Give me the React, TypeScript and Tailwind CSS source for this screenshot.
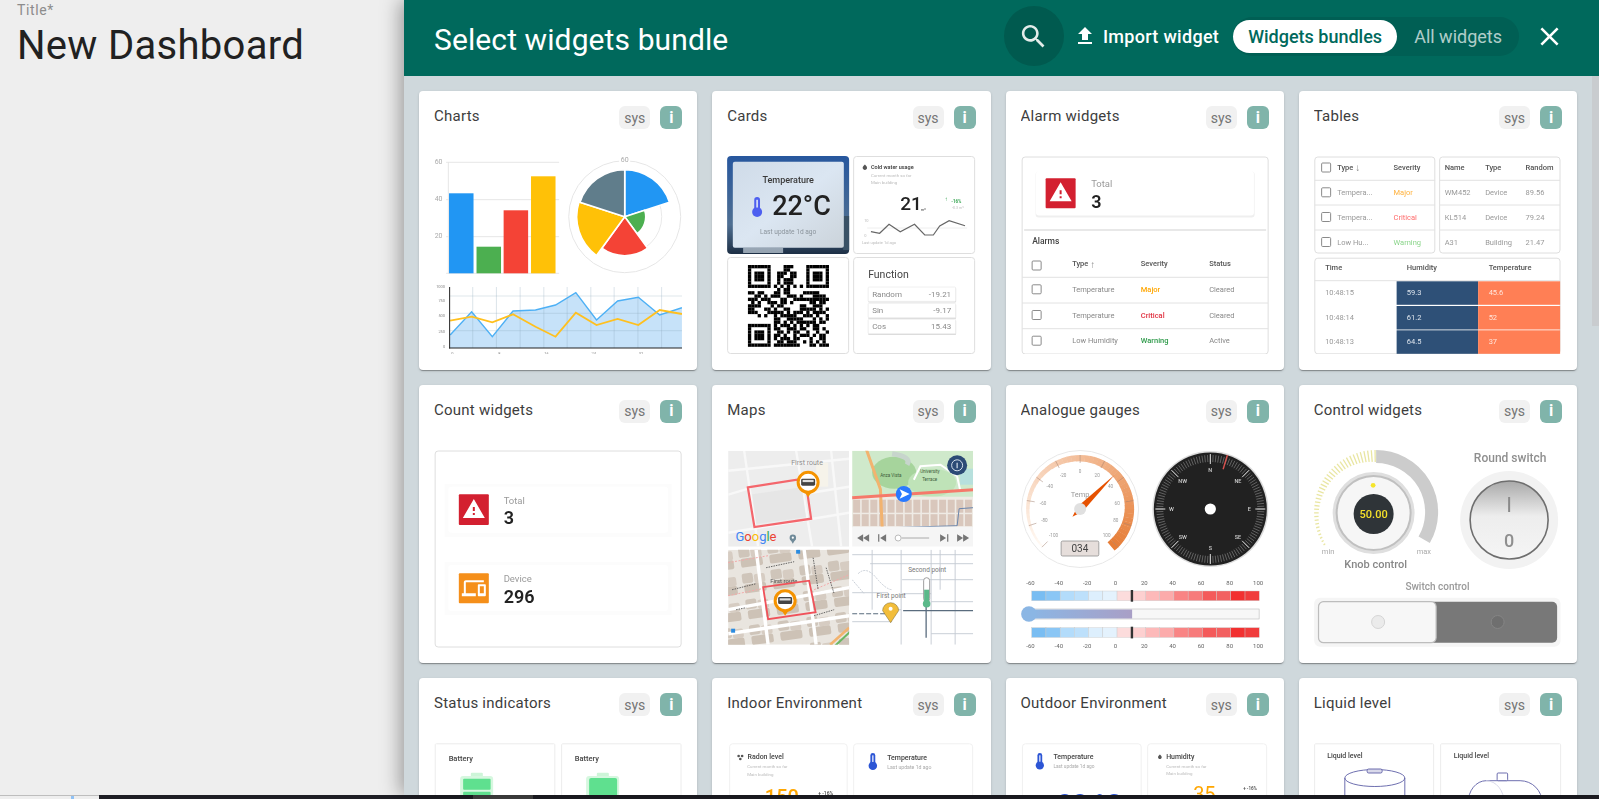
import type { ReactNode } from 'react';

const BUNDLES_ROW = 'h-[278.5px]';

const pol = (cx: number, cy: number, r: number, deg: number): [number, number] => {
  const a = (deg * Math.PI) / 180;
  return [cx + r * Math.sin(a), cy - r * Math.cos(a)];
};

const sector = (cx: number, cy: number, r: number, from: number, to: number) => {
  const [x1, y1] = pol(cx, cy, r, from);
  const [x2, y2] = pol(cx, cy, r, to);
  return `M${cx} ${cy}L${x1} ${y1}A${r} ${r} 0 0 1 ${x2} ${y2}Z`;
};

const arc = (cx: number, cy: number, r: number, from: number, to: number) => {
  const [x1, y1] = pol(cx, cy, r, from);
  const [x2, y2] = pol(cx, cy, r, to);
  return `M${x1} ${y1}A${r} ${r} 0 ${to - from > 180 ? 1 : 0} 1 ${x2} ${y2}`;
};

function T({
  x,
  y,
  s = 7,
  c = '#666',
  w = 400,
  a = 'start',
  children,
}: {
  x: number;
  y: number;
  s?: number;
  c?: string;
  w?: number;
  a?: 'start' | 'middle' | 'end';
  children: ReactNode;
}) {
  return (
    <text x={x} y={y} fontSize={s} fill={c} fontWeight={w} textAnchor={a} dominantBaseline="central">
      {children}
    </text>
  );
}

function Box({ x, y, w, h, r = 3, c = '#dedede' }: { x: number; y: number; w: number; h: number; r?: number; c?: string }) {
  return <rect x={x + 0.5} y={y + 0.5} width={w - 1} height={h - 1} rx={r} fill="#fff" stroke={c} />;
}

function Check({ x, y, s = 9 }: { x: number; y: number; s?: number }) {
  return <rect x={x} y={y} width={s} height={s} rx={1} fill="#fff" stroke="#8a8a8a" />;
}

function Thermo({ x, y, h = 18, c = '#2c55d5' }: { x: number; y: number; h?: number; c?: string }) {
  const k = h / 18;
  return (
    <g transform={`translate(${x} ${y}) scale(${k})`}>
      <rect x={-2.6} y={0} width={5.2} height={13} rx={2.6} fill={c} />
      <circle cx={0} cy={13.5} r={4.5} fill={c} />
      <rect x={-0.8} y={2.5} width={1.6} height={7} fill="#cfd9f7" />
    </g>
  );
}

function Drop({ x, y, s = 6, c = '#555' }: { x: number; y: number; s?: number; c?: string }) {
  return (
    <path
      transform={`translate(${x} ${y}) scale(${s / 24})`}
      fill={c}
      d="M12 2c-5.33 4.55-8 8.48-8 11.8 0 4.98 3.8 8.2 8 8.2s8-3.22 8-8.2C20 10.48 17.33 6.55 12 2z"
    />
  );
}

function Warn({ x, y, s }: { x: number; y: number; s: number }) {
  return (
    <path
      transform={`translate(${x} ${y}) scale(${s / 24})`}
      fill="#fff"
      d="M1 21h22L12 2 1 21zm12-3h-2v-2h2v2zm0-4h-2v-4h2v4z"
    />
  );
}

function Thumb({ children }: { children: ReactNode }) {
  return (
    <svg viewBox="0 0 248 198" className="block h-[198px] w-full blur-[0.4px]">
      {children}
    </svg>
  );
}

function ChartsThumb() {
  const blue = '16,179 37.5,155.7 58.2,180.7 78.9,155 101.4,154 121.4,149 141.7,136.7 162.4,164 183.5,145 204.2,141.3 225.6,159 247.8,151.7';
  const amber = '16,164.7 37.5,160.7 58.2,166.3 78.9,158.3 101.4,170.7 121.4,180.7 141.7,156.7 162.4,169 183.5,163 204.2,169 225.6,154 247.8,158';
  return (
    <Thumb>
      {[6.3, 43.7, 80.7, 117.3].map((y) => (
        <line key={y} x1={12} x2={125} y1={y} y2={y} stroke="#e6e6e6" />
      ))}
      <line x1={14.2} x2={14.2} y1={6} y2={118} stroke="#e6e6e6" />
      <T x={4.5} y={6} s={7} c="#aaa" a="middle">60</T>
      <T x={4.5} y={43} s={7} c="#aaa" a="middle">40</T>
      <T x={4.5} y={80} s={7} c="#aaa" a="middle">20</T>
      <rect x={14.9} y={37.3} width={24.5} height={80} fill="#2196f3" />
      <rect x={42.4} y={90.7} width={24.5} height={26.6} fill="#4caf50" />
      <rect x={69.5} y={54.3} width={24.5} height={63} fill="#f44336" />
      <rect x={96.9} y={20.3} width={24.5} height={97} fill="#ffc107" />

      <circle cx={190.6} cy={60.7} r={56} fill="none" stroke="#e6e6e6" />
      <circle cx={190.6} cy={60.7} r={37} fill="none" stroke="#e9e9e9" />
      <path d={sector(190.6, 60.7, 47, 0, 72)} fill="#2196f3" stroke="#fff" strokeWidth={1.6} />
      <path d={sector(190.6, 60.7, 21, 72, 144)} fill="#4caf50" stroke="#fff" strokeWidth={1.6} />
      <path d={sector(190.6, 60.7, 39, 144, 216)} fill="#f44336" stroke="#fff" strokeWidth={1.6} />
      <path d={sector(190.6, 60.7, 48, 216, 288)} fill="#ffc107" stroke="#fff" strokeWidth={1.6} />
      <path d={sector(190.6, 60.7, 47, 288, 360)} fill="#607d8b" stroke="#fff" strokeWidth={1.6} />
      <rect x={185} y={0} width={11} height={8} fill="#fff" />
      <T x={190.6} y={4} s={7} c="#aaa" a="middle">60</T>

      <polygon points={`15.5,192 ${blue} 247.8,192`} fill="#c6e2f9" />
      {[38.6, 62.3, 86, 109.7, 133, 156.7, 180, 203.8, 227.5].map((x) => (
        <line key={x} x1={x} x2={x} y1={131} y2={192} stroke="#8aa4b8" strokeOpacity={0.3} />
      ))}
      {[140, 157.3, 174.7].map((y) => (
        <line key={y} x1={15} x2={248} y1={y} y2={y} stroke="#8aa4b8" strokeOpacity={0.28} />
      ))}
      <polyline points={blue} fill="none" stroke="#4db0f5" strokeWidth={1.4} />
      <polyline points={amber} fill="none" stroke="#ffc01f" strokeWidth={1.8} />
      <line x1={15.5} x2={15.5} y1={131} y2={192.5} stroke="#222" strokeWidth={1} />
      <line x1={15} x2={248} y1={192} y2={192} stroke="#222" strokeWidth={1} />
      {[
        ['1000', 130],
        ['750', 144],
        ['500', 159],
        ['250', 175],
        ['0', 190],
      ].map(([l, y]) => (
        <T key={l} x={11} y={y as number} s={4} c="#888" a="end">{l}</T>
      ))}
      {[
        ['0', 18.3],
        ['8', 65.3],
        ['16', 112.3],
        ['24', 159.7],
        ['32', 206.8],
      ].map(([l, x]) => (
        <T key={l} x={x as number} y={197} s={4} c="#888" a="middle">{l}</T>
      ))}
    </Thumb>
  );
}

const QR = [
  '1111111000011100001111111',
  '1000001000011000001000001',
  '1011101001110110001011101',
  '1011101001100110001011101',
  '1011101001011100001011101',
  '1000001001011100001000001',
  '1111111010101010101111111',
  '0000000001011000000000000',
  '1101100011011000011111000',
  '0011010111001110100011110',
  '1110111000110011111111111',
  '0101001110110100000110110',
  '1111000101100000110011100',
  '1100011010011000111110101',
  '1110001111101011101011110',
  '0001010010111110011101001',
  '0000000011001111100010101',
  '0000000011010101111110110',
  '1111111010111010101011000',
  '1000001011001110110011010',
  '1011101001101011001001001',
  '1011101011010010111010110',
  '1011101010111011000100110',
  '1000001001101110010101010',
  '1111111011111111000110111',
];

function CardsThumb() {
  const spark = '143.8,75.7 152.5,77.3 161.9,68.3 173.1,75.7 187.4,68.3 197.6,79 206.2,79 212.6,70 222,64.7 237.9,69.7';
  return (
    <Thumb>
      <defs>
        <linearGradient id="tempbg" x1="0" x2="0" y1="0" y2="1">
          <stop offset="0" stopColor="#27579e" />
          <stop offset="0.7" stopColor="#4f6f92" />
          <stop offset="1" stopColor="#1d2f45" />
        </linearGradient>
        <linearGradient id="temppanel" x1="0" x2="1" y1="0" y2="1">
          <stop offset="0" stopColor="#cfdbe8" />
          <stop offset="0.5" stopColor="#dbe6f2" />
          <stop offset="1" stopColor="#cbd3da" />
        </linearGradient>
      </defs>
      <rect x={0} y={0} width={122} height={98} rx={4} fill="url(#tempbg)" />
      <rect x={116} y={60} width={6} height={34} fill="#3a5266" />
      <rect x={5.7} y={5.7} width={111} height={86} rx={2} fill="url(#temppanel)" />
      <rect x={16} y={92} width={40} height={5} fill="#c9d4de" opacity={0.7} />
      <T x={61} y={24} s={9} c="#3a3a3a" w={500} a="middle">Temperature</T>
      <Thermo x={30} y={41} h={20} c="#4d5ff0" />
      <T x={45} y={50} s={27} c="#222" w={500}>22°C</T>
      <T x={61} y={76} s={6.6} c="#8b949c" a="middle">Last update 1d ago</T>

      <Box x={126} y={0} w={122} h={98} />
      <Drop x={134.5} y={8} s={6.5} />
      <T x={143.8} y={11.3} s={5.5} c="#444" w={600}>Cold water usage</T>
      <T x={143.8} y={19.3} s={4.4} c="#bbb">Current month so far</T>
      <T x={143.8} y={26} s={4.4} c="#bbb">Main building</T>
      <T x={173} y={47} s={19} c="#222" w={500}>21</T>
      <T x={193.5} y={53} s={4} c="#444">m³</T>
      <T x={219} y={42} s={6} c="#3aa655" a="middle">↑</T>
      <T x={224} y={45.7} s={4.5} c="#3aa655" w={700}>-16%</T>
      <T x={225} y={51.7} s={3.6} c="#bbb">-0.3 m³</T>
      <line x1={140} x2={240} y1={72} y2={72} stroke="#eee" />
      <T x={137} y={64} s={4} c="#bbb">10</T>
      <T x={137} y={79} s={4} c="#bbb">0</T>
      <polyline points={spark} fill="none" stroke="#666" strokeWidth={1.2} />
      <T x={134.8} y={86.3} s={4} c="#bbb">Last update 1d ago</T>

      <Box x={0} y={101} w={122} h={97} />
      {QR.map((row, r) =>
        row.split('').map((v, c) =>
          v === '1' ? <rect key={`${r}-${c}`} x={20.8 + c * 3.24} y={109 + r * 3.27} width={3.3} height={3.33} fill="#000" /> : null,
        ),
      )}

      <Box x={126} y={101} w={122} h={97} />
      <T x={141} y={118.7} s={10.5} c="#444">Function</T>
      {[
        ['Random', '-19.21', 131],
        ['Sin', '-9.17', 147.3],
        ['Cos', '15.43', 163.3],
      ].map(([l, v, y]) => (
        <g key={l as string}>
          <rect x={141} y={(y as number) + 0.8} width={88} height={14.8} rx={1} fill="#dadada" />
          <rect x={141} y={y as number} width={87.5} height={14.4} rx={1} fill="#fff" stroke="#ececec" strokeWidth={0.8} />
          <T x={145} y={(y as number) + 7.4} s={8} c="#8a8a8a">{l}</T>
          <T x={224} y={(y as number) + 7.4} s={8} c="#8a8a8a" a="end">{v}</T>
        </g>
      ))}
    </Thumb>
  );
}

function AlarmThumb() {
  return (
    <Thumb>
      <Box x={0.5} y={0.5} w={247} h={198} />
      <rect x={14.5} y={15.5} width={219} height={46} rx={3} fill="#efefef" />
      <rect x={14.8} y={15} width={218} height={44.6} rx={3} fill="#fff" />
      <rect x={24.5} y={22.3} width={30} height={30} rx={1} fill="#d32030" />
      <Warn x={27.5} y={24.3} s={24} />
      <T x={70} y={27.7} s={9.5} c="#9a9a9a">Total</T>
      <T x={70} y={45} s={18} c="#222" w={600}>3</T>
      <line x1={3} x2={245} y1={74} y2={74} stroke="#e8e8e8" strokeWidth={2} />
      <T x={11} y={85} s={8.5} c="#444" w={500}>Alarms</T>
      <Check x={11} y={105} />
      <T x={51} y={107.7} s={7.5} c="#555" w={500}>
        Type <tspan fontSize={10} fill="#888">↑</tspan>
      </T>
      <T x={119.7} y={107.7} s={7.5} c="#555" w={500}>Severity</T>
      <T x={188} y={107.7} s={7.5} c="#555" w={500}>Status</T>
      {[121.3, 147, 172.7].map((y) => (
        <line key={y} x1={1} x2={247} y1={y} y2={y} stroke="#e2e2e2" />
      ))}
      {[
        ['Temperature', 'Major', '#ffa600', 'Cleared', 133.3],
        ['Temperature', 'Critical', '#e0303f', 'Cleared', 159],
        ['Low Humidity', 'Warning', '#2e9a4a', 'Active', 184.7],
      ].map(([a, b, c, d, y]) => (
        <g key={y as number}>
          <Check x={11} y={(y as number) - 4.5} />
          <T x={51} y={y as number} s={7.5} c="#888">{a}</T>
          <T x={119.7} y={y as number} s={7.5} c={c as string} w={500}>{b}</T>
          <T x={188} y={y as number} s={7.5} c="#888">{d}</T>
        </g>
      ))}
    </Thumb>
  );
}

function TablesThumb() {
  return (
    <Thumb>
      <Box x={0.2} y={0.5} w={121} h={97} />
      <Box x={125} y={0.5} w={121.4} h={97} />
      {[24.3, 49, 74].map((y) => (
        <g key={y}>
          <line x1={0.5} x2={121} y1={y} y2={y} stroke="#e2e2e2" />
          <line x1={125.5} x2={246} y1={y} y2={y} stroke="#e2e2e2" />
        </g>
      ))}
      <Check x={7.5} y={7} />
      <T x={23} y={11.3} s={7.5} c="#555" w={500}>
        Type <tspan fontSize={10} fill="#888">↓</tspan>
      </T>
      <T x={79.4} y={11.3} s={7.5} c="#555" w={500}>Severity</T>
      {[
        ['Tempera...', 'Major', '#ffb13b', 36.3],
        ['Tempera...', 'Critical', '#ff6b6b', 61],
        ['Low Hu...', 'Warning', '#8bd58b', 86],
      ].map(([a, b, c, y]) => (
        <g key={y as number}>
          <Check x={7.5} y={(y as number) - 4.5} />
          <T x={23} y={y as number} s={7.5} c="#999">{a}</T>
          <T x={79.4} y={y as number} s={7.5} c={c as string}>{b}</T>
        </g>
      ))}
      <T x={130.6} y={11.3} s={7.5} c="#555" w={500}>Name</T>
      <T x={171} y={11.3} s={7.5} c="#555" w={500}>Type</T>
      <T x={211.4} y={11.3} s={7.5} c="#555" w={500}>Random</T>
      {[
        ['WM452', 'Device', '89.56', 36.3],
        ['KL514', 'Device', '79.24', 61],
        ['A31', 'Building', '21.47', 86],
      ].map(([a, b, c, y]) => (
        <g key={y as number}>
          <T x={130.6} y={y as number} s={7.5} c="#999">{a}</T>
          <T x={171} y={y as number} s={7.5} c="#999">{b}</T>
          <T x={211.4} y={y as number} s={7.5} c="#999">{c}</T>
        </g>
      ))}

      <Box x={0.2} y={101.7} w={246.2} h={96.6} />
      <T x={11} y={111.7} s={7.5} c="#555" w={500}>Time</T>
      <T x={92.6} y={111.7} s={7.5} c="#555" w={500}>Humidity</T>
      <T x={174.5} y={111.7} s={7.5} c="#555" w={500}>Temperature</T>
      <line x1={0.5} x2={246} y1={124.7} y2={124.7} stroke="#e2e2e2" />
      {[
        ['10:48:15', '59.3', '45.6', 125.3, 136.3],
        ['10:48:14', '61.2', '52', 150, 161],
        ['10:48:13', '64.5', '37', 174.3, 185.7],
      ].map(([t, h, c, top, y]) => (
        <g key={t as string}>
          <rect x={82.5} y={top as number} width={81.5} height={23.5} fill="#2e5077" />
          <rect x={164} y={top as number} width={82} height={23.5} fill="#ff7f55" />
          <T x={11} y={y as number} s={7.5} c="#999">{t}</T>
          <T x={92.6} y={y as number} s={7.5} c="#dfe6ee">{h}</T>
          <T x={174.5} y={y as number} s={7.5} c="#ffe6dc">{c}</T>
        </g>
      ))}
    </Thumb>
  );
}

function CountThumb() {
  return (
    <Thumb>
      <Box x={0.5} y={0.5} w={247} h={197} />
      <rect x={10.5} y={34} width={227} height={53} fill="#fcfcfc" />
      <rect x={14.2} y={36.7} width={219.7} height={46} rx={3} fill="#fff" />
      <rect x={24.7} y={44.3} width={30} height={30.7} rx={1} fill="#d32030" />
      <Warn x={27.7} y={47} s={24} />
      <T x={69.5} y={50} s={9.5} c="#9a9a9a">Total</T>
      <T x={69.5} y={67.3} s={18} c="#222" w={600}>3</T>
      <rect x={10.5} y={112} width={227} height={53} fill="#fcfcfc" />
      <rect x={14.2} y={115} width={219.7} height={46} rx={3} fill="#fff" />
      <rect x={24.7} y={123.3} width={30} height={30} rx={1} fill="#f58f1a" />
      <path
        transform="translate(27.7 126.3) scale(1)"
        fill="#fff"
        d="M4 6h18V4H4c-1.1 0-2 .9-2 2v11H0v3h14v-3H4V6zm19 2h-6c-.55 0-1 .45-1 1v10c0 .55.45 1 1 1h6c.55 0 1-.45 1-1V9c0-.55-.45-1-1-1zm-1 9h-4v-7h4v7z"
      />
      <T x={69.5} y={128.7} s={9.5} c="#9a9a9a">Device</T>
      <T x={69.5} y={146} s={18} c="#222" w={600}>296</T>
    </Thumb>
  );
}

function BusPin({ x, y }: { x: number; y: number }) {
  return (
    <g transform={`translate(${x} ${y})`}>
      <polygon points="-4,9 4,9 0,15" fill="#f59300" />
      <circle r={10} fill="#fff" stroke="#f59300" strokeWidth={3} />
      <rect x={-7} y={-3.6} width={14} height={7} rx={1.4} fill="#444" />
      <rect x={-5.5} y={-2.4} width={11} height={2.2} fill="#ddd" />
    </g>
  );
}

function MapsThumb() {
  const houses = Array.from({ length: 14 }, (_, i) => i);
  const blocks: [number, number][] = [];
  for (let a = 0; a < 5; a++) for (let b = 0; b < 5; b++) blocks.push([-12 + a * 29, -8 + b * 26]);
  return (
    <Thumb>
      <svg x={1} y={0.7} width={121} height={96}>
        <rect width={121} height={96} fill="#ededed" />
        <g stroke="#f8f8f8" strokeWidth={2.4} fill="none">
          <path d="M0 20L121 8M0 82L121 62M0 44L20 38M83 42L121 36" />
          <path d="M16 0L30 96M68 0L84 96M103 0L113 96" />
        </g>
        <rect x={26} y={40} width={50} height={30} fill="#e6e6e6" transform="rotate(-8 50 55)" />
        <rect x={88} y={12} width={12} height={24} fill="#f6f3ea" />
        <polygon points="19.7,36.6 69,29 79,40.6 83,68 26.3,76.3" fill="none" stroke="#f4666c" strokeWidth={2.2} />
        <BusPin x={80} y={31.6} />
        <T x={63} y={12.3} s={7} c="#8f8f8f">First route</T>
        <text x={7.3} y={90} fontSize={13} fontWeight={400}>
          <tspan fill="#4285f4">G</tspan>
          <tspan fill="#ea4335">o</tspan>
          <tspan fill="#fbbc05">o</tspan>
          <tspan fill="#4285f4">g</tspan>
          <tspan fill="#34a853">l</tspan>
          <tspan fill="#ea4335">e</tspan>
        </text>
        <circle cx={64.7} cy={87} r={3.2} fill="#6f8a99" />
        <polygon points="61.8,88 67.6,88 64.7,93" fill="#6f8a99" />
        <circle cx={64.7} cy={87} r={1.1} fill="#fff" />
      </svg>

      <svg x={125} y={0.7} width={121} height={96}>
        <rect width={121} height={76} fill="#cfe9cb" />
        <ellipse cx={42} cy={22} rx={22} ry={16} fill="#a6d49c" />
        <ellipse cx={80} cy={32} rx={24} ry={14} fill="#bfe3b8" />
        <rect x={108} y={18} width={13} height={16} fill="#b7e0dd" />
        <path d="M40 3Q60 6 55 14" fill="none" stroke="#c7d5cc" strokeWidth={5} />
        <rect y={46} width={121} height={31} fill="#efebe5" />
        {houses.map((i) => (
          <g key={i}>
            <rect x={1 + i * 8.6} y={49} width={7} height={13} fill="#d9c7bc" />
            <rect x={1 + i * 8.6} y={63.5} width={7} height={12} fill="#d9c7bc" />
          </g>
        ))}
        <path d="M61.7 29L68.3 15.6L88.3 14L105 25.6L108.3 40.6" fill="none" stroke="#fff" strokeWidth={2} />
        <path d="M14 -2L28.3 38.6L30 76" fill="none" stroke="#f2b36f" strokeWidth={3} />
        <path d="M0 47L121 39" stroke="#f5796a" strokeWidth={3} />
        <path d="M121 57L107 58L105 75L40 77" fill="none" stroke="#6a86ad" strokeWidth={1} />
        <T x={28} y={25} s={4.5} c="#3d5c3a">Anza Vista</T>
        <T x={68} y={21} s={4.5} c="#3d5c3a">University</T>
        <T x={70} y={29} s={4.5} c="#3d5c3a">Terrace</T>
        <circle cx={51.7} cy={43.3} r={8} fill="#2979ff" />
        <polygon points="47.5,38.5 57.5,43.3 47.5,48 49.8,43.3" fill="#fff" />
        <circle cx={105} cy={14.6} r={10} fill="#2c4a75" />
        <circle cx={105} cy={14.6} r={5.5} fill="none" stroke="#d5dfeb" strokeWidth={1} />
        <line x1={105} x2={105} y1={12} y2={17.5} stroke="#d5dfeb" strokeWidth={1.2} />
        <rect y={76} width={121} height={20} fill="#f5f5f5" />
        <g fill="#757575">
          <polygon points="5,87.3 11,83.5 11,91" />
          <polygon points="11,87.3 17,83.5 17,91" />
          <rect x={26} y={83.5} width={1.2} height={7.5} />
          <polygon points="28,87.3 34,83.5 34,91" />
          <polygon points="88,83.5 94,87.3 88,91" />
          <rect x={95} y={83.5} width={1.2} height={7.5} />
          <polygon points="105,83.5 111,87.3 105,91" />
          <polygon points="111,83.5 117,87.3 111,91" />
        </g>
        <circle cx={46} cy={87.3} r={3} fill="#fff" stroke="#bbb" />
        <line x1={49.5} x2={77} y1={87.3} y2={87.3} stroke="#aaa" />
      </svg>

      <svg x={1} y={99.7} width={121} height={95}>
        <rect width={121} height={95} fill="#e9e5df" />
        <g transform="rotate(-8 60 48)">
          {blocks.map(([x, y]) => (
            <g key={`${x}-${y}`}>
              <rect x={x} y={y} width={11} height={10} rx={2} fill="#cfc5ba" />
              <rect x={x + 12} y={y + 2} width={11} height={9} rx={2} fill="#d6ccc2" />
              <rect x={x + 1} y={y + 11} width={22} height={9} rx={2} fill="#cdc2b6" />
            </g>
          ))}
        </g>
        <g fill="none" stroke="#fff" strokeWidth={3.4}>
          <path d="M28 0L40 95M76 0L88 95" />
          <path d="M0 60L121 38M0 84L121 66" />
        </g>
        <path d="M0 13L40 6M0 46L34 39M86 40L121 25" fill="none" stroke="#f3a9a9" strokeWidth={1} strokeDasharray="2 1.5" />
        <rect x={68} y={0} width={4} height={4} fill="#2a8be0" />
        <rect x={3} y={79} width={4} height={4} fill="#2a8be0" />
        <path d="M102 95L121 78" stroke="#f2b36f" strokeWidth={2.5} />
        <path d="M107 96L122 82" stroke="#6cb663" strokeWidth={2} />
        <g stroke="#555" strokeWidth={0.9} strokeDasharray="1.5 1">
          <path d="M38 18L66 12M4 40L28 34M85 8L90 40M98 18L106 44M86 66L106 60M8 60L18 58" />
        </g>
        <T x={42} y={31} s={6} c="#555">First route</T>
        <polygon points="35,37.5 81,31 87.5,62.5 40,69.5" fill="none" stroke="#f0525a" strokeWidth={1.8} />
        <BusPin x={57} y={51} />
      </svg>

      <svg x={125} y={99.7} width={121} height={95}>
        <rect width={121} height={95} fill="#fff" />
        <g stroke="#c3c9d2" strokeWidth={0.9} fill="none">
          <path d="M20 0V60M49 0V95M79 0V95M103 0V95M88 0V40" />
          <path d="M0 5H121M18 14H121M0 43H36M50 30H121M36 60H49M79 52H121M0 72H40M79 84H121M50 44H79" />
          <path d="M6 24Q14 16 24 28T40 40M0 30L12 44" strokeDasharray="2 1" />
        </g>
        <path d="M51 61H121" stroke="#5a6c7e" strokeWidth={1.2} />
        <path d="M74 56V88" stroke="#5a6c7e" strokeWidth={1.3} />
        <path d="M0 64H38" stroke="#5a6c7e" strokeWidth={1.1} strokeDasharray="5 2" />
        <T x={75} y={20} s={6.5} c="#777" a="middle">Second point</T>
        <T x={39} y={46} s={6.5} c="#777" a="middle">First point</T>
        <rect x={71.5} y={28} width={6} height={24} rx={3} fill="#fff" stroke="#888" strokeWidth={0.8} />
        <rect x={72} y={40} width={5} height={16} fill="#5bb98a" />
        <circle cx={74.5} cy={54} r={3.8} fill="#5bb98a" />
        <path d="M38.5 73L30.5 61A8 8 0 1 1 46.5 61Z" fill="#f2bd3a" stroke="#7a6a3a" strokeWidth={0.5} />
        <circle cx={38.5} cy={59} r={2} fill="#fff" />
      </svg>
    </Thumb>
  );
}

const scaleLabels = ['-60', '-40', '-20', '0', '20', '40', '60', '80', '100'];
const scaleX = [9.4, 37.7, 66, 94.4, 123.2, 151.5, 179.9, 208.6, 237];
const cells = ['#79bdf2', '#8ac6f5', '#b3dcfb', '#bde0fb', '#ddeffd', '#e4f2fd', '#fcdcdc', '#fdd0d0', '#fdb9b9', '#fcabab', '#f98484', '#f77b7b', '#f45a5a', '#f26060', '#f23030', '#f03c3c'];

function GaugeScale({ y }: { y: number }) {
  return (
    <g>
      {cells.map((c, i) => (
        <rect key={c} x={10.6 + i * 14.22} y={y} width={14.22} height={9.7} fill={c} stroke="#c8c8c8" strokeWidth={0.4} />
      ))}
      <rect x={109.6} y={y - 1} width={2.4} height={11.7} fill="#333" />
    </g>
  );
}

function GaugesThumb() {
  const steps = Array.from({ length: 55 }, (_, i) => i);
  const dirs = [
    ['N', 0],
    ['NE', 45],
    ['E', 90],
    ['SE', 135],
    ['S', 180],
    ['SW', 225],
    ['W', 270],
    ['NW', 315],
  ] as const;
  const ticks = Array.from({ length: 120 }, (_, i) => i * 3);
  const labels = [-100, -80, -60, -40, -20, 0, 20, 40, 60, 80, 100];
  return (
    <Thumb>
      <defs>
        <linearGradient id="thermo" x1="0" x2="1" y1="0" y2="0">
          <stop offset="0" stopColor="#8bb6e4" />
          <stop offset="1" stopColor="#a99fc6" />
        </linearGradient>
      </defs>
      <circle cx={59} cy={59} r={58.5} fill="#fff" stroke="#e8e8e8" strokeWidth={1} />
      {steps.map((i) => {
        const t = i / 54;
        const from = -135 + t * 270;
        const w = 2 + t * 9;
        const r = Math.round(255 - 25 * t);
        const g = Math.round(250 - 125 * t);
        const b = Math.round(245 - 190 * t);
        return <path key={i} d={arc(59, 59, 54 - w / 2, from, from + 5.4)} fill="none" stroke={`rgb(${r},${g},${b})`} strokeWidth={w} />;
      })}
      {labels.map((l, i) => {
        const d = -135 + i * 27;
        const [x1, y1] = pol(59, 59, 54, d);
        const [x2, y2] = pol(59, 59, 46, d);
        const [x, y] = pol(59, 59, 37.5, d);
        return (
          <g key={l}>
            <line x1={x1} y1={y1} x2={x2} y2={y2} stroke="#a08070" strokeWidth={0.5} />
            <T x={x} y={y} s={4.6} c="#999" a="middle">{l}</T>
          </g>
        );
      })}
      <T x={59} y={44.3} s={7.5} c="#9a9a9a" a="middle">Temp</T>
      <polygon points="93.3,25 61.5,61.5 51.3,66.7 56.5,56.5" fill="#e65100" />
      <circle cx={59} cy={59} r={6} fill="#e0e0e0" />
      <rect x={40} y={91} width={37.7} height={15} rx={1.5} fill="#e6dedb" stroke="#8f8f8f" strokeWidth={0.8} />
      <T x={58.8} y={98.8} s={10} c="#444" a="middle">034</T>

      <circle cx={189.2} cy={59} r={58} fill="#dcdcdc" />
      <circle cx={189.2} cy={59} r={56.5} fill="#212121" />
      {ticks.map((d) => {
        const [x1, y1] = pol(189.2, 59, 54, d);
        const [x2, y2] = pol(189.2, 59, 47, d);
        return <line key={d} x1={x1} y1={y1} x2={x2} y2={y2} stroke="#8d8d8d" strokeWidth={0.6} />;
      })}
      {dirs.map(([l, d]) => {
        const [x1, y1] = pol(189.2, 59, 55, d);
        const [x2, y2] = pol(189.2, 59, 45, d);
        const [x, y] = pol(189.2, 59, 39, d);
        return (
          <g key={l}>
            <line x1={x1} y1={y1} x2={x2} y2={y2} stroke="#ddd" strokeWidth={1} />
            <T x={x} y={y} s={5.5} c="#ccc" w={500} a="middle">{l}</T>
          </g>
        );
      })}
      <line x1={206.3} y1={5} x2={202} y2={19.3} stroke="#d9534f" strokeWidth={1.4} />
      <circle cx={189.2} cy={59} r={5.6} fill="#fff" />

      {scaleLabels.map((l, i) => (
        <T key={l} x={scaleX[i]} y={132.7} s={6} c="#666" a="middle">{l}</T>
      ))}
      <GaugeScale y={141} />
      <rect x={13} y={159} width={225} height={10} fill="#f7f7f7" stroke="#bbb" strokeWidth={0.6} />
      <rect x={10} y={159.5} width={101} height={9} fill="url(#thermo)" />
      <circle cx={7.8} cy={164} r={7.8} fill="#8bb6e4" />
      <GaugeScale y={177.7} />
      {scaleLabels.map((l, i) => (
        <T key={l} x={scaleX[i]} y={195} s={6} c="#666" a="middle">{l}</T>
      ))}
    </Thumb>
  );
}

function ControlsThumb() {
  const yticks = Array.from({ length: 36 }, (_, i) => i);
  return (
    <Thumb>
      <defs>
        <linearGradient id="roundsw" x1="0" x2="0" y1="0" y2="1">
          <stop offset="0" stopColor="#a9a9a9" />
          <stop offset="0.45" stopColor="#ededed" />
          <stop offset="1" stopColor="#f5f5f5" />
        </linearGradient>
      </defs>
      {yticks.map((i) => {
        const d = -122 + (i * 121) / 35;
        const [x1, y1] = pol(62, 62, 62, d);
        const [x2, y2] = pol(62, 62, 60 - (i / 35) * 10, d);
        return <line key={i} x1={x1} y1={y1} x2={x2} y2={y2} stroke="#e9e6a2" strokeWidth={1.3} />;
      })}
      <path d={arc(62, 62, 55.5, 0, 120)} fill="none" stroke="#cccccc" strokeWidth={13} />
      <circle cx={59.5} cy={63} r={41} fill="#dfdfdf" />
      <circle cx={59.5} cy={63} r={37} fill="#f6f6f6" stroke="#c0c0c0" strokeWidth={2} />
      <circle cx={59} cy={35.3} r={2.4} fill="#f5e52c" />
      <circle cx={59.5} cy={64} r={20} fill="#2f3438" />
      <T x={59.5} y={64} s={11} c="#f4e02a" w={500} a="middle">50.00</T>
      <T x={14} y={101.7} s={7.5} c="#aaa" a="middle">min</T>
      <T x={109.7} y={101.7} s={7.5} c="#aaa" a="middle">max</T>
      <T x={61.5} y={114} s={11} c="#888" w={500} a="middle">Knob control</T>

      <T x={196} y={7.7} s={12} c="#8f8f8f" w={500} a="middle">Round switch</T>
      <circle cx={195} cy={70} r={49} fill="#f2f2f2" />
      <circle cx={195} cy={70} r={39} fill="url(#roundsw)" stroke="#6e6e6e" strokeWidth={1.6} />
      <rect x={194} y={47} width={2} height={15} fill="#8a8a8a" />
      <T x={195} y={90} s={18} c="#8f8f8f" w={500} a="middle">0</T>

      <T x={123.3} y={136.7} s={10} c="#999" w={500} a="middle">Switch control</T>
      <rect x={0} y={147.7} width={246.4} height={49} rx={6} fill="#f5f5f5" />
      <rect x={4.4} y={151.7} width={238.6} height={41} rx={5} fill="#787878" />
      <rect x={4.4} y={151.7} width={117.6} height={41} rx={5} fill="#f7f7f7" stroke="#bdbdbd" strokeWidth={1.2} />
      <circle cx={64} cy={172} r={6.5} fill="#ebebeb" stroke="#d5d5d5" />
      <circle cx={183.5} cy={172} r={6.5} fill="#6f6f6f" stroke="#858585" />
    </Thumb>
  );
}

function Battery({ x, full }: { x: number; full?: boolean }) {
  return (
    <g>
      <rect x={x + 10.7} y={29.7} width={12} height={5} rx={1} fill="#cdf5d8" />
      <rect x={x} y={33} width={33} height={60} rx={3} fill="#d6f7df" />
      {full ? (
        <rect x={x + 3} y={35} width={28} height={50} rx={2} fill="#5fe08f" />
      ) : (
        <>
          <rect x={x + 3} y={35.7} width={27.5} height={11} rx={1} fill="#5fe08f" />
          <rect x={x + 3} y={48.7} width={27.5} height={11} rx={1} fill="#5fe08f" />
        </>
      )}
    </g>
  );
}

function StatusThumb() {
  return (
    <Thumb>
      <Box x={0.6} y={0.3} w={120.6} h={120} r={1} c="#ececec" />
      <Box x={127} y={0.3} w={120.4} h={120} r={1} c="#ececec" />
      <T x={14.5} y={15.3} s={7.5} c="#444" w={500}>Battery</T>
      <T x={140.6} y={15.3} s={7.5} c="#444" w={500}>Battery</T>
      <Battery x={26} />
      <Battery x={152} full />
    </Thumb>
  );
}

function IndoorThumb() {
  return (
    <Thumb>
      <Box x={2} y={0.3} w={118.5} h={120} c="#f0f0f0" />
      <Box x={126} y={0.3} w={120} h={120} c="#f0f0f0" />
      <g fill="#555">
        <circle cx={11.5} cy={13} r={1.3} />
        <circle cx={15} cy={13} r={1.3} />
        <circle cx={13.2} cy={16} r={1.3} />
      </g>
      <T x={20.4} y={14.3} s={7} c="#444" w={500}>Radon level</T>
      <T x={20} y={23} s={4.4} c="#bbb">Current month so far</T>
      <T x={20} y={31.3} s={4.4} c="#bbb">Main building</T>
      <T x={37.7} y={54} s={20} c="#ffa600" w={500}>150</T>
      <T x={91} y={50} s={5} c="#444" w={500}>+ -16%</T>
      <Thermo x={145.7} y={10} h={17} />
      <T x={160} y={14.7} s={7} c="#444" w={500}>Temperature</T>
      <T x={160} y={24} s={5.2} c="#aaa">Last update 1d ago</T>
    </Thumb>
  );
}

function OutdoorThumb() {
  return (
    <Thumb>
      <Box x={0.8} y={0.3} w={119.7} h={120} c="#f0f0f0" />
      <Box x={126} y={0.3} w={120} h={120} c="#f0f0f0" />
      <Thermo x={18.7} y={10} h={16.5} />
      <T x={32.3} y={14.3} s={7} c="#444" w={500}>Temperature</T>
      <T x={32.3} y={23} s={4.8} c="#aaa">Last update 1d ago</T>
      <T x={36} y={62} s={27} c="#2c55d5" w={500}>22 °C</T>
      <Drop x={136} y={11} s={5.5} />
      <T x={145} y={14.3} s={7} c="#444" w={500}>Humidity</T>
      <T x={145} y={23} s={4.4} c="#bbb">Current month so far</T>
      <T x={145} y={30} s={4.4} c="#bbb">Main building</T>
      <T x={172} y={51} s={20} c="#ffa600" w={400}>35</T>
      <T x={222} y={45} s={4.6} c="#444" w={500}>+ -16%</T>
    </Thumb>
  );
}

function LiquidThumb() {
  return (
    <Thumb>
      <Box x={0} y={0.3} w={120} h={120} r={1} c="#ececec" />
      <Box x={126} y={0.3} w={121} h={120} r={1} c="#ececec" />
      <T x={13} y={13} s={7} c="#444" w={500}>Liquid level</T>
      <T x={139.6} y={13} s={7} c="#444" w={500}>Liquid level</T>
      <g fill="none" stroke="#5d5fa6" strokeWidth={0.9}>
        <ellipse cx={60.7} cy={35} rx={30} ry={8.5} />
        <path d="M30.7 35V90M90.7 35V90" />
        <rect x={53} y={26} width={15} height={4} rx={1.5} fill="#d9d9ea" />
        <path d="M154 60A18 22 0 0 1 172 37.7H206A22 22 0 0 1 228 60" />
        <path d="M172 37.7A18 22 0 0 1 190 60" stroke="#d5d5e6" />
        <rect x={183} y={30} width={10.5} height={7.7} rx={1} fill="#fff" />
      </g>
    </Thumb>
  );
}

function BundleCard({ title, children }: { title: string; children: ReactNode }) {
  return (
    <div className={`${BUNDLES_ROW} rounded bg-white px-[15px] pt-[15px] shadow-[0_2px_1px_-1px_rgba(0,0,0,0.2),0_1px_1px_0_rgba(0,0,0,0.14),0_1px_3px_0_rgba(0,0,0,0.12)]`}>
      <div className="mb-[27px] flex h-[23px] items-start">
        <span className="flex-1 truncate text-[15px] leading-5 tracking-[0.25px] text-[#3d3d3d]">{title}</span>
        <span className="flex h-[23px] w-[31px] items-center justify-center rounded-md bg-[#f1f1f1] text-sm text-[#757575]">sys</span>
        <span className="ml-[10px] flex h-[23px] w-[22px] items-center justify-center rounded-md bg-[#80b4aa] text-base font-bold text-white">i</span>
      </div>
      {children}
    </div>
  );
}

export default function App() {
  return (
    <div className="flex h-screen w-full flex-col overflow-hidden font-['Roboto',sans-serif]">
      <div className="relative h-[795px] bg-[#eeeeee]">
        <div className="px-[17px]">
          <div className="text-sm leading-[20px] tracking-[0.6px] text-[#8c8c8c]">Title*</div>
          <div className="text-[40px] leading-[52px] tracking-[0.3px] text-[#212121]">New Dashboard</div>
        </div>

        <div className="absolute inset-y-0 right-0 flex w-[1195px] flex-col bg-[#cfd8dc] shadow-[-4px_0_18px_rgba(0,0,0,0.35)]">
          <div className="flex h-[76px] shrink-0 items-center bg-[#00695c] pb-1 pl-[30px] pr-[34px] text-white">
            <h1 className="mt-[7px] flex-1 text-[30px] font-normal tracking-[0.1px]">Select widgets bundle</h1>
            <button className="flex h-[60px] w-[60px] items-center justify-center rounded-full bg-[#005a4f]">
              <svg viewBox="0 0 24 24" className="h-[31px] w-[31px]" fill="#e3ecea">
                <path d="M15.5 14h-.79l-.28-.27C15.41 12.59 16 11.11 16 9.5 16 5.91 13.09 3 9.5 3S3 5.91 3 9.5 5.91 16 9.5 16c1.61 0 3.09-.59 4.23-1.57l.27.28v.79l5 4.99L20.49 19l-4.99-5zm-6 0C7.01 14 5 11.99 5 9.5S7.01 5 9.5 5 14 7.01 14 9.5 11.99 14 9.5 14z" />
              </svg>
            </button>
            <button className="ml-[9px] flex items-center gap-[6px] text-[18px] font-medium tracking-[0.3px]">
              <svg viewBox="0 0 24 24" className="h-6 w-6" fill="#fff">
                <path d="M9 16h6v-6h4l-7-7-7 7h4zm-4 2h14v2H5z" />
              </svg>
              Import widget
            </button>
            <div className="ml-[14px] flex h-[39px] items-center rounded-full bg-[#005f54] text-[18px]">
              <span className="flex h-[33px] w-[164px] items-center justify-center rounded-full bg-white font-medium text-[#00695c]">Widgets bundles</span>
              <span className="px-[17px] text-white/70">All widgets</span>
            </div>
            <svg viewBox="0 0 24 24" className="ml-[15px] h-[31px] w-[31px]" fill="#fff">
              <path d="M19 6.41L17.59 5 12 10.59 6.41 5 5 6.41 10.59 12 5 17.59 6.41 19 12 13.41 17.59 19 19 17.59 13.41 12z" />
            </svg>
          </div>

          <div className="flex min-h-0 flex-1">
            <div className="min-w-0 flex-1 overflow-hidden">
              <div className="grid grid-cols-4 gap-[15px] p-[15px]">
                <BundleCard title="Charts"><ChartsThumb /></BundleCard>
                <BundleCard title="Cards"><CardsThumb /></BundleCard>
                <BundleCard title="Alarm widgets"><AlarmThumb /></BundleCard>
                <BundleCard title="Tables"><TablesThumb /></BundleCard>
                <BundleCard title="Count widgets"><CountThumb /></BundleCard>
                <BundleCard title="Maps"><MapsThumb /></BundleCard>
                <BundleCard title="Analogue gauges"><GaugesThumb /></BundleCard>
                <BundleCard title="Control widgets"><ControlsThumb /></BundleCard>
                <BundleCard title="Status indicators"><StatusThumb /></BundleCard>
                <BundleCard title="Indoor Environment"><IndoorThumb /></BundleCard>
                <BundleCard title="Outdoor Environment"><OutdoorThumb /></BundleCard>
                <BundleCard title="Liquid level"><LiquidThumb /></BundleCard>
              </div>
            </div>
            <div className="w-[7px] shrink-0">
              <div className="h-[250px] bg-[#c9cccf]" />
            </div>
          </div>
        </div>
      </div>

      <div className="flex h-1 shrink-0">
        <div className="relative w-[99px] border-t border-[#bdbdbd] bg-[#eeeeee]">
          <div className="absolute left-[71px] top-0 h-[3px] w-[3px] bg-[#90c2f5]" />
        </div>
        <div className="flex flex-1 bg-[#1e1e24]">
          <div className="ml-[374px] w-[60px] bg-[#444444]" />
        </div>
      </div>
    </div>
  );
}
